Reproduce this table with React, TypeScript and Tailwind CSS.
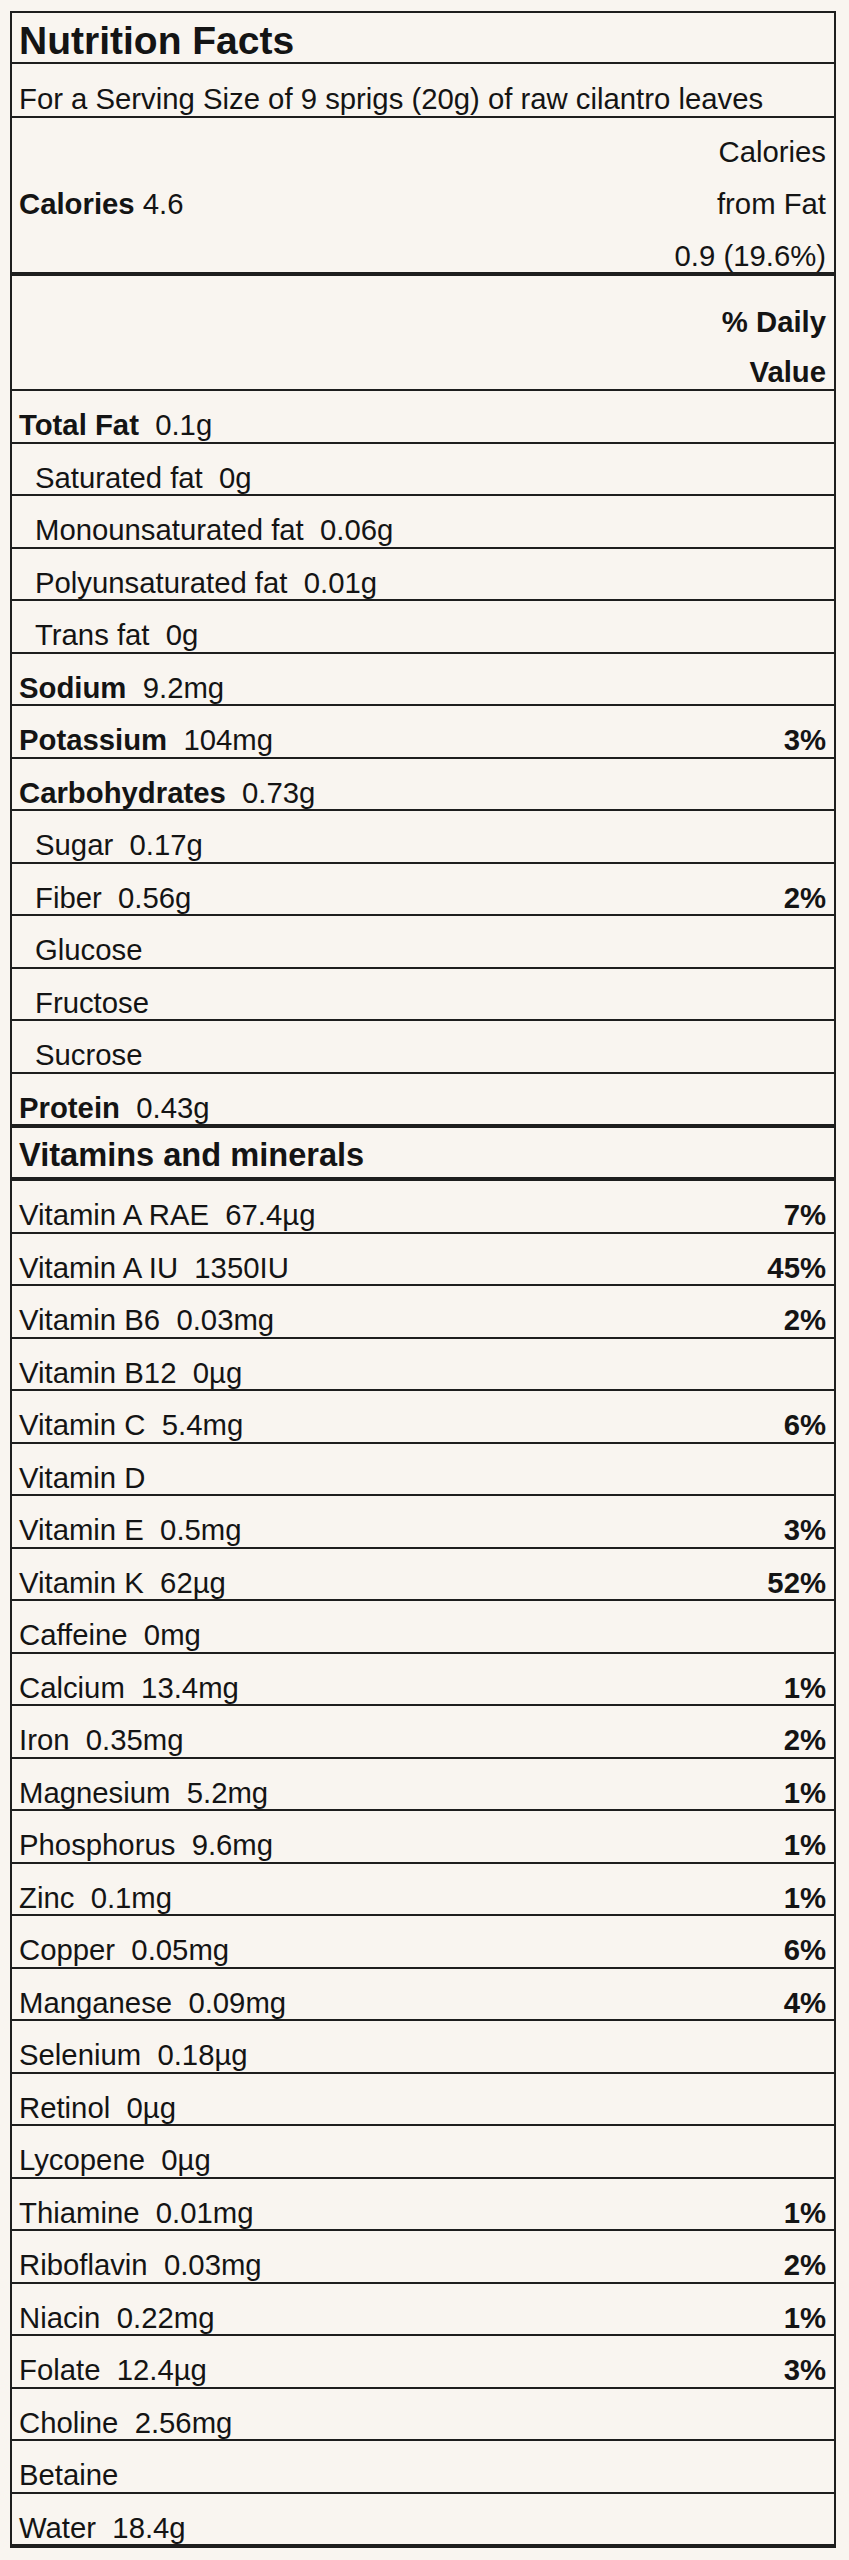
import React from "react";

type Row = { name: string; value?: string; dv?: string; bold?: boolean; indent?: boolean };

const main: Row[] = [
  { name: "Total Fat", value: "0.1g", bold: true },
  { name: "Saturated fat", value: "0g", indent: true },
  { name: "Monounsaturated fat", value: "0.06g", indent: true },
  { name: "Polyunsaturated fat", value: "0.01g", indent: true },
  { name: "Trans fat", value: "0g", indent: true },
  { name: "Sodium", value: "9.2mg", bold: true },
  { name: "Potassium", value: "104mg", dv: "3%", bold: true },
  { name: "Carbohydrates", value: "0.73g", bold: true },
  { name: "Sugar", value: "0.17g", indent: true },
  { name: "Fiber", value: "0.56g", dv: "2%", indent: true },
  { name: "Glucose", indent: true },
  { name: "Fructose", indent: true },
  { name: "Sucrose", indent: true },
];

const vitamins: Row[] = [
  { name: "Vitamin A RAE", value: "67.4µg", dv: "7%" },
  { name: "Vitamin A IU", value: "1350IU", dv: "45%" },
  { name: "Vitamin B6", value: "0.03mg", dv: "2%" },
  { name: "Vitamin B12", value: "0µg" },
  { name: "Vitamin C", value: "5.4mg", dv: "6%" },
  { name: "Vitamin D" },
  { name: "Vitamin E", value: "0.5mg", dv: "3%" },
  { name: "Vitamin K", value: "62µg", dv: "52%" },
  { name: "Caffeine", value: "0mg" },
  { name: "Calcium", value: "13.4mg", dv: "1%" },
  { name: "Iron", value: "0.35mg", dv: "2%" },
  { name: "Magnesium", value: "5.2mg", dv: "1%" },
  { name: "Phosphorus", value: "9.6mg", dv: "1%" },
  { name: "Zinc", value: "0.1mg", dv: "1%" },
  { name: "Copper", value: "0.05mg", dv: "6%" },
  { name: "Manganese", value: "0.09mg", dv: "4%" },
  { name: "Selenium", value: "0.18µg" },
  { name: "Retinol", value: "0µg" },
  { name: "Lycopene", value: "0µg" },
  { name: "Thiamine", value: "0.01mg", dv: "1%" },
  { name: "Riboflavin", value: "0.03mg", dv: "2%" },
  { name: "Niacin", value: "0.22mg", dv: "1%" },
  { name: "Folate", value: "12.4µg", dv: "3%" },
  { name: "Choline", value: "2.56mg" },
  { name: "Betaine" },
  { name: "Water", value: "18.4g" },
];

function NRow({ r, thick }: { r: Row; thick?: boolean }) {
  return (
    <div
      className={
        "flex items-end justify-between border-[#1e1e1e] pr-[8px] pb-[2px] leading-none " +
        (thick ? "h-[54.5px] border-b-4 " : "h-[52.5px] border-b-2 ") +
        (r.indent ? "pl-[23px]" : "pl-[7px]")
      }
    >
      <span className="whitespace-pre">
        <span className={r.bold ? "font-bold" : ""}>{r.name}</span>
        {r.value ? "  " + r.value : ""}
      </span>
      {r.dv ? <span className="font-bold">{r.dv}</span> : null}
    </div>
  );
}

export default function App() {
  return (
    <div
      className="min-h-[2560px] bg-[#f9f5f0] pl-[10px] pt-[11px] text-[29.3px] text-[#141414]"
      style={{ fontFamily: '"Liberation Sans", Arial, Helvetica, sans-serif' }}
    >
      <div className="w-[826px] border-2 border-[#1e1e1e]">
        <div className="flex h-[51px] items-end border-b-2 border-[#1e1e1e] pb-[2px] pl-[7px] text-[39px] font-bold leading-none">
          Nutrition Facts
        </div>
        <div className="flex h-[54px] items-end border-b-2 border-[#1e1e1e] pb-[2.5px] pl-[7px] leading-none">
          For a Serving Size of 9 sprigs (20g) of raw cilantro leaves
        </div>
        <div className="flex h-[158px] items-end justify-between border-b-4 border-[#1e1e1e] pb-[1.5px] pl-[7px] pr-[8px] leading-none">
          <span className="mb-[52px]">
            <span className="font-bold">Calories</span> 4.6
          </span>
          <div className="flex flex-col items-end gap-[23px]">
            <span>Calories</span>
            <span>from Fat</span>
            <span>0.9 (19.6%)</span>
          </div>
        </div>
        <div className="flex h-[115px] items-end justify-end border-b-2 border-[#1e1e1e] pb-[2.5px] pr-[8px] font-bold leading-none">
          <div className="flex flex-col items-end gap-[21px]">
            <span>% Daily</span>
            <span>Value</span>
          </div>
        </div>
        {main.map((r) => (
          <NRow key={r.name} r={r} />
        ))}
        <NRow r={{ name: "Protein", value: "0.43g", bold: true }} thick />
        <div className="flex h-[53px] items-end border-b-4 border-[#1e1e1e] pb-[5px] pl-[7px] text-[32.6px] font-bold leading-none">
          Vitamins and minerals
        </div>
        {vitamins.map((r) => (
          <NRow key={r.name} r={r} />
        ))}
      </div>
    </div>
  );
}
